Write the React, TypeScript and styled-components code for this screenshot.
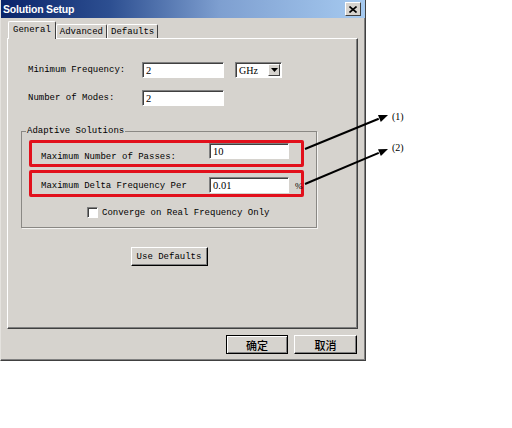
import React from 'react'
import styled, { createGlobalStyle } from 'styled-components'

const GlobalStyle = createGlobalStyle`
    html, body {
        margin: 0;
        padding: 0;
        background: #fff;
    }
    body {
        font-family: "Liberation Mono", "DejaVu Sans Mono", monospace;
    }
`

const Page = styled.div`
    position: relative;
    width: 512px;
    height: 428px;
    background: #fff;
    overflow: hidden;
`

const Dialog = styled.div`
    width: 366px;
    height: 361px;
    box-sizing: border-box;
    background: #d6d3ce;
    border-left: 1px solid #e4e2de;
    border-right: 1px solid #404040;
    border-bottom: 1px solid #404040;
    box-shadow: inset -1px -1px 0 #808080;
    display: flex;
    flex-direction: column;
`

const TitleBar = styled.div`
    height: 18px;
    display: flex;
    align-items: center;
    justify-content: space-between;
    padding: 0 4px 0 2px;
    background: linear-gradient(to right, #0a246a 0%, #2d4f91 30%, #7e9fd0 60%, #a6caf0 100%);
`

const Title = styled.span`
    font-family: "Liberation Sans", Arial, sans-serif;
    font-weight: bold;
    font-size: 10.5px;
    color: #fff;
    letter-spacing: -0.2px;
`

const CloseButton = styled.div`
    width: 14px;
    height: 12px;
    display: flex;
    align-items: center;
    justify-content: center;
    background: #d6d3ce;
    border-top: 1px solid #fff;
    border-left: 1px solid #fff;
    border-right: 1px solid #404040;
    border-bottom: 1px solid #404040;
`

const Body = styled.div`
    padding: 3px 7px 0 6px;
    display: flex;
    flex-direction: column;
`

const TabStrip = styled.div`
    display: flex;
    align-items: flex-end;
    height: 17px;
    padding-left: 1px;
`

const Tab = styled.div<{ $active?: boolean }>`
    position: relative;
    z-index: ${(p) => (p.$active ? 2 : 1)};
    height: ${(p) => (p.$active ? 18 : 14)}px;
    margin-bottom: ${(p) => (p.$active ? -1 : 0)}px;
    padding: 0 ${(p) => (p.$active ? 4 : 3)}px;
    display: flex;
    align-items: center;
    box-sizing: border-box;
    font-size: 9px;
    color: #000;
    background: #d6d3ce;
    border-top: 1px solid #fff;
    border-left: 1px solid #fff;
    border-right: 1px solid #404040;
    border-radius: 2px 2px 0 0;
    ${(p) => (p.$active ? 'padding-bottom: 2px;' : '')}
`

const Panel = styled.div`
    width: 351px;
    height: 291px;
    box-sizing: border-box;
    border-top: 1px solid #fff;
    border-left: 1px solid #fff;
    border-right: 1px solid #404040;
    border-bottom: 1px solid #404040;
    box-shadow: inset -1px -1px 0 #808080;
    padding-top: 23px;
    display: flex;
    flex-direction: column;
`

const FormRow = styled.div<{ $gap?: number }>`
    display: flex;
    align-items: center;
    padding-left: 20px;
    margin-top: ${(p) => p.$gap ?? 0}px;
`

const Label = styled.span<{ $width: number; $offset?: number }>`
    width: ${(p) => p.$width}px;
    flex-shrink: 0;
    font-size: 9px;
    line-height: 10px;
    color: #000;
    margin-top: ${(p) => p.$offset ?? 0}px;
`

const Field = styled.div<{ $width: number; $offset?: number }>`
    width: ${(p) => p.$width}px;
    height: 16px;
    box-sizing: border-box;
    flex-shrink: 0;
    margin-top: ${(p) => p.$offset ?? 0}px;
    background: #fff;
    border-top: 1px solid #808080;
    border-left: 1px solid #808080;
    border-right: 1px solid #fff;
    border-bottom: 1px solid #fff;
    box-shadow: inset 1px 1px 0 #404040;
    padding: 1px 0 0 3px;
    font-family: "Liberation Serif", "Times New Roman", serif;
    font-size: 10.5px;
    line-height: 13px;
    color: #000;
`

const Select = styled.div`
    width: 47px;
    height: 16px;
    margin-left: 11px;
    box-sizing: border-box;
    display: flex;
    align-items: center;
    justify-content: space-between;
    background: #fff;
    border-top: 1px solid #808080;
    border-left: 1px solid #808080;
    border-right: 1px solid #fff;
    border-bottom: 1px solid #fff;
    box-shadow: inset 1px 1px 0 #404040;
    padding: 1px 1px 1px 3px;
    font-family: "Liberation Serif", "Times New Roman", serif;
    font-size: 10px;
    color: #000;
`

const DropButton = styled.div`
    width: 12px;
    height: 12px;
    box-sizing: border-box;
    display: flex;
    align-items: center;
    justify-content: center;
    background: #d6d3ce;
    border-top: 1px solid #fff;
    border-left: 1px solid #fff;
    border-right: 1px solid #404040;
    border-bottom: 1px solid #404040;
`

const Group = styled.fieldset`
    width: 296px;
    box-sizing: border-box;
    margin: 20px 0 0 13px;
    padding: 4px 0 9px 0;
    min-width: 0;
    border: 1px solid #8a8884;
    box-shadow: 1px 1px 0 #f4f3f1;
`

const GroupTitle = styled.legend`
    font-size: 9px;
    line-height: 10px;
    padding: 0 1px;
    margin-left: 4px;
    color: #000;
`

const Highlight = styled.div<{ $gap?: number }>`
    width: 275px;
    height: 27px;
    box-sizing: border-box;
    margin: ${(p) => p.$gap ?? 0}px 0 0 7px;
    border: 3px solid #e2101c;
    border-radius: 2px;
    display: flex;
    align-items: flex-start;
    padding-left: 9px;
`

const Unit = styled.span`
    margin: 8px 0 0 6px;
    font-family: "Liberation Serif", serif;
    font-size: 9px;
    line-height: 10px;
    color: #000;
`

const CheckRow = styled.div`
    display: flex;
    align-items: center;
    gap: 4px;
    margin-top: 10px;
    padding-left: 65px;
`

const CheckBox = styled.div`
    width: 11px;
    height: 11px;
    box-sizing: border-box;
    background: #fff;
    border-top: 1px solid #808080;
    border-left: 1px solid #808080;
    border-right: 1px solid #fff;
    border-bottom: 1px solid #fff;
    box-shadow: inset 1px 1px 0 #404040;
`

const CenterRow = styled.div`
    width: 296px;
    margin: 19px 0 0 13px;
    display: flex;
    justify-content: center;
`

const Button = styled.div<{ $width: number; $default?: boolean; $cjk?: boolean }>`
    width: ${(p) => p.$width}px;
    height: 19px;
    box-sizing: border-box;
    display: flex;
    align-items: center;
    justify-content: center;
    background: #d6d3ce;
    border-top: 1px solid ${(p) => (p.$default ? '#000' : '#fff')};
    border-left: 1px solid ${(p) => (p.$default ? '#000' : '#fff')};
    border-right: 1px solid #000;
    border-bottom: 1px solid #000;
    box-shadow: ${(p) =>
        p.$default ? 'inset 1px 1px 0 #fff, inset -1px -1px 0 #808080' : 'inset -1px -1px 0 #808080'};
    font-family: ${(p) =>
        p.$cjk ? '"Noto Sans CJK SC", "Noto Sans", sans-serif' : '"Liberation Mono", monospace'};
    font-size: ${(p) => (p.$cjk ? 11 : 9)}px;
    font-weight: ${(p) => (p.$cjk ? 500 : 400)};
    color: #000;
`

const Footer = styled.div`
    display: flex;
    justify-content: flex-end;
    gap: 6px;
    margin-top: 6px;
    padding-right: 1px;
`

const Annotations = styled.svg`
    position: absolute;
    left: 0;
    top: 0;
    pointer-events: none;
`

const Callout = styled.span<{ $top: number }>`
    position: absolute;
    left: 392px;
    top: ${(p) => p.$top}px;
    font-family: "Liberation Serif", "Times New Roman", serif;
    font-size: 10px;
    line-height: 12px;
    color: #000;
`

const Arrow = ({ x1, y1, x2, y2 }: { x1: number; y1: number; x2: number; y2: number }) => {
    const angle = Math.atan2(y2 - y1, x2 - x1)
    const len = 10
    const spread = 0.38
    const bx = x2 - len * Math.cos(angle)
    const by = y2 - len * Math.sin(angle)
    const p1 = [x2 - len * Math.cos(angle - spread), y2 - len * Math.sin(angle - spread)]
    const p2 = [x2 - len * Math.cos(angle + spread), y2 - len * Math.sin(angle + spread)]
    return (
        <g>
            <line x1={x1} y1={y1} x2={bx} y2={by} stroke="#000" strokeWidth={2} />
            <polygon points={`${x2},${y2} ${p1[0]},${p1[1]} ${p2[0]},${p2[1]}`} fill="#000" />
        </g>
    )
}

const App = () => {
    return (
        <Page>
            <GlobalStyle />
            <Dialog>
                <TitleBar>
                    <Title>Solution Setup</Title>
                    <CloseButton>
                        <svg width="8" height="7" viewBox="0 0 8 7">
                            <path d="M0.5 0.5 L7.5 6.5 M7.5 0.5 L0.5 6.5" stroke="#000" strokeWidth="1.6" />
                        </svg>
                    </CloseButton>
                </TitleBar>

                <Body>
                    <TabStrip>
                        <Tab $active>General</Tab>
                        <Tab>Advanced</Tab>
                        <Tab>Defaults</Tab>
                    </TabStrip>

                    <Panel>
                        <FormRow>
                            <Label $width={114}>Minimum Frequency:</Label>
                            <Field $width={82}>2</Field>
                            <Select>
                                <span>GHz</span>
                                <DropButton>
                                    <svg width="7" height="4" viewBox="0 0 7 4">
                                        <path d="M0 0 H7 L3.5 4 Z" fill="#000" />
                                    </svg>
                                </DropButton>
                            </Select>
                        </FormRow>
                        <FormRow $gap={12}>
                            <Label $width={114}>Number of Modes:</Label>
                            <Field $width={82}>2</Field>
                        </FormRow>

                        <Group>
                            <GroupTitle>Adaptive Solutions</GroupTitle>
                            <Highlight>
                                <Label $width={168} $offset={9}>Maximum Number of Passes:</Label>
                                <Field $width={80}>10</Field>
                            </Highlight>
                            <Highlight $gap={3}>
                                <Label $width={168} $offset={8}>Maximum Delta Frequency Per</Label>
                                <Field $width={80} $offset={4}>0.01</Field>
                                <Unit>%</Unit>
                            </Highlight>
                            <CheckRow>
                                <CheckBox />
                                <Label $width={170}>Converge on Real Frequency Only</Label>
                            </CheckRow>
                        </Group>

                        <CenterRow>
                            <Button $width={77}>Use Defaults</Button>
                        </CenterRow>
                    </Panel>

                    <Footer>
                        <Button $width={62} $default $cjk>确定</Button>
                        <Button $width={63} $cjk>取消</Button>
                    </Footer>
                </Body>
            </Dialog>

            <Annotations width={512} height={428} viewBox="0 0 512 428">
                <Arrow x1={305} y1={149} x2={388} y2={115} />
                <Arrow x1={305} y1={184} x2={388} y2={149} />
            </Annotations>
            <Callout $top={111}>(1)</Callout>
            <Callout $top={142}>(2)</Callout>
        </Page>
    )
}

export default App
